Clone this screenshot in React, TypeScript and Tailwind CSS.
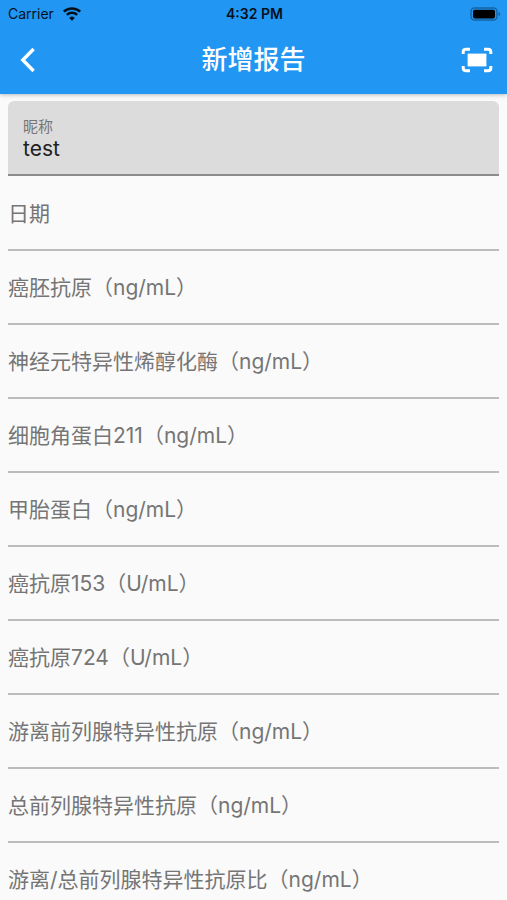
import type React from "react";
import { useState } from "react";

interface ReportField {
	id: string;
	label: string;
}

const FIELDS: ReportField[] = [
	{ id: "date", label: "日期" },
	{ id: "cea", label: "癌胚抗原（ng/mL）" },
	{ id: "nse", label: "神经元特异性烯醇化酶（ng/mL）" },
	{ id: "cyfra211", label: "细胞角蛋白211（ng/mL）" },
	{ id: "afp", label: "甲胎蛋白（ng/mL）" },
	{ id: "ca153", label: "癌抗原153（U/mL）" },
	{ id: "ca724", label: "癌抗原724（U/mL）" },
	{ id: "fpsa", label: "游离前列腺特异性抗原（ng/mL）" },
	{ id: "tpsa", label: "总前列腺特异性抗原（ng/mL）" },
	{ id: "ratio", label: "游离/总前列腺特异性抗原比（ng/mL）" },
];

const WifiIcon = () => (
	<svg viewBox="0 0 20 15" className="w-5 h-4" fill="none" aria-hidden="true">
		<path d="M1.8 5.2a11.8 11.8 0 0 1 16.4 0" stroke="#04111d" strokeWidth="2.5" />
		<path d="M4.8 8.4a7.4 7.4 0 0 1 10.4 0" stroke="#04111d" strokeWidth="2.3" />
		<path d="M10 14.3 7.2 11.4a4 4 0 0 1 5.6 0Z" fill="#04111d" />
	</svg>
);

const BatteryIcon = () => (
	<svg viewBox="0 0 31 14" className="w-[31px] h-[14px]" aria-hidden="true">
		<rect x="1" y="1" width="26" height="12" rx="3.5" fill="#2196f3" stroke="#1763a0" strokeWidth="1.4" />
		<rect x="3" y="2.8" width="22" height="8.6" rx="1.8" fill="#000" />
		<path d="M28.5 5v4q1.8-.6 1.8-2t-1.8-2Z" fill="#1763a0" />
	</svg>
);

const BackIcon = () => (
	<svg viewBox="0 0 16 26" className="w-4 h-[26px]" fill="none" aria-hidden="true">
		<path d="M13.6 2 2.8 13l10.8 11" stroke="#fff" strokeWidth="3.4" />
	</svg>
);

const ScanIcon = () => (
	<svg viewBox="0 0 32 26" className="w-8 h-[26px]" fill="none" aria-hidden="true">
		<path
			d="M9 2.2H5Q2.2 2.2 2.2 5v2M23 2.2h4q2.8 0 2.8 2.8v2M9 23.8H5q-2.8 0-2.8-2.8v-2M23 23.8h4q2.8 0 2.8-2.8v-2"
			stroke="#fff"
			strokeWidth="3"
		/>
		<rect x="6.6" y="6.6" width="18.8" height="12.8" fill="#fff" />
	</svg>
);

export const AddReportPage: React.FC = () => {
	const [nickname, setNickname] = useState("test");
	const [values, setValues] = useState<Record<string, string>>({});

	const handleChange = (id: string, value: string) => {
		setValues({ ...values, [id]: value });
	};

	return (
		<div className="h-screen flex flex-col overflow-hidden bg-[#fafafa] font-['Inter','Noto_Sans_CJK_SC',sans-serif]">
			<header className="shrink-0 z-10 bg-[#2196f3] shadow-[0_1px_4px_rgba(0,0,0,0.25)]">
				{/* Status bar */}
				<div className="h-7 pl-2 pr-1.5 grid grid-cols-3 items-center text-sm text-[#04111d]">
					<div className="flex items-center gap-2">
						<span>Carrier</span>
						<WifiIcon />
					</div>
					<span className="text-center font-semibold">4:32 PM</span>
					<div className="flex justify-end">
						<BatteryIcon />
					</div>
				</div>

				{/* App bar */}
				<div className="h-[66px] pl-5 pr-3.5 pb-0.5 grid grid-cols-[32px_1fr_38px] items-center">
					<button type="button" aria-label="返回">
						<BackIcon />
					</button>
					<h1 className="text-center text-[26px] leading-8 font-medium text-white">新增报告</h1>
					<button type="button" aria-label="扫描" className="flex justify-end">
						<ScanIcon />
					</button>
				</div>
			</header>

			<form className="flex-1 min-h-0 overflow-y-auto [scrollbar-width:none] px-2 pt-[7px]">
				<div className="h-[75px] px-[15px] pt-4 flex flex-col rounded-t-md border-b-2 border-[#8c8c8c] bg-[#dcdcdc]">
					<label htmlFor="nickname" className="text-[15px] leading-5 text-[#757575]">
						昵称
					</label>
					<input
						id="nickname"
						value={nickname}
						onChange={(e) => setNickname(e.target.value)}
						className="w-full text-[21px] leading-6 text-[#212121] outline-none"
					/>
				</div>

				<div className="pt-px">
					{FIELDS.map((field) => (
						<div key={field.id} className="h-[74px] pt-px flex items-center border-b-2 border-[#bcbcbc]">
							<label htmlFor={field.id} className="shrink-0 text-[21px] leading-8 text-[#757575]">
								{field.label}
							</label>
							<input
								id={field.id}
								value={values[field.id] ?? ""}
								onChange={(e) => handleChange(field.id, e.target.value)}
								className="flex-1 min-w-0 h-full pl-2 text-[21px] text-[#212121] outline-none"
							/>
						</div>
					))}
				</div>
			</form>
		</div>
	);
};

export default AddReportPage;
